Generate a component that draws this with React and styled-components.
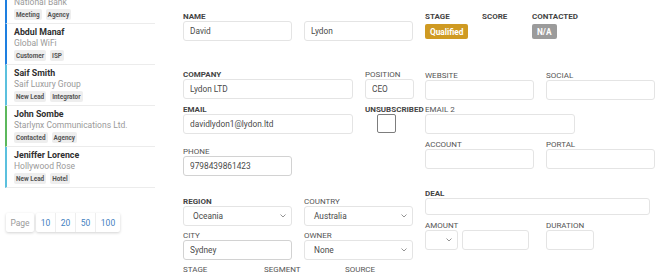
import React from 'react'
import styled, { createGlobalStyle } from 'styled-components'

const GlobalStyle = createGlobalStyle`
  html, body {
    margin: 0;
    padding: 0;
    overflow: hidden;
    background: #fff;
    font-family: Roboto, "Liberation Sans", Arial, sans-serif;
  }
`;

const leads = [
    { name: 'Mark Evans', company: 'National Bank', tags: ['Meeting', 'Agency'], color: '#1e7fe0' },
    { name: 'Abdul Manaf', company: 'Global WiFi', tags: ['Customer', 'ISP'], color: '#1e7fe0' },
    { name: 'Saif Smith', company: 'Saif Luxury Group', tags: ['New Lead', 'Integrator'], color: '#5bc0de' },
    { name: 'John Sombe', company: 'Starlynx Communications Ltd.', tags: ['Contacted', 'Agency'], color: '#5cb85c' },
    { name: 'Jeniffer Lorence', company: 'Hollywood Rose', tags: ['New Lead', 'Hotel'], color: '#5bc0de' },
];

function Chevron() {
    return (
        <svg width="6" height="4" viewBox="0 0 6 4">
            <polyline points="0.5,0.5 3,3 5.5,0.5" fill="none" stroke="#888" strokeWidth="0.9" />
        </svg>
    )
}

function Field({ label, bold, width, value, select, strong, height, empty, children }) {
    let control = children
    if (!children && !empty) {
        control = select
            ? <SelectBox $strong={strong}><span>{value}</span><Chevron /></SelectBox>
            : <Input $strong={strong} $height={height} defaultValue={value} readOnly />
    }
    return (
        <FieldBox $width={width}>
            <Label $bold={bold}>{label}</Label>
            {control}
        </FieldBox>
    )
}

function App() {
    return (
        <Page>
            <GlobalStyle />
            <Sidebar>
                <LeadList>
                    {leads.map((l) => (
                        <LeadItem key={l.name} $color={l.color}>
                            <LeadName>{l.name}</LeadName>
                            <LeadCompany>{l.company}</LeadCompany>
                            <Tags>
                                {l.tags.map((t) => <Tag key={t}>{t}</Tag>)}
                            </Tags>
                        </LeadItem>
                    ))}
                </LeadList>
                <Pager>
                    <PageLabel>Page</PageLabel>
                    <PageGroup>
                        <PageLink>10</PageLink>
                        <PageLink>20</PageLink>
                        <PageLink>50</PageLink>
                        <PageLink $wide>100</PageLink>
                    </PageGroup>
                </Pager>
            </Sidebar>

            <Form>
                <Column>
                    <Row>
                        <Field label="Name" bold width={109} value="David" />
                        <Field label="" width={109} value="Lydon" />
                    </Row>
                    <Row $mt={29}>
                        <Field label="Company" bold width={170} value="Lydon LTD" />
                        <Field label="Position" width={49} value="CEO" />
                    </Row>
                    <Row $mt={6}>
                        <Field label="Email" bold width={170} value="davidlydon1@lydon.ltd" />
                        <Field label="Unsubscribed" bold width={49}>
                            <Checkbox />
                        </Field>
                    </Row>
                    <Row $mt={13}>
                        <Field label="Phone" width={109} value="9798439861423" strong />
                    </Row>
                    <Row $mt={21}>
                        <Field label="Region" bold width={109} value="Oceania" select />
                        <Field label="Country" width={109} value="Australia" select />
                    </Row>
                    <Row $mt={5}>
                        <Field label="City" width={109} value="Sydney" strong />
                        <Field label="Owner" width={109} value="None" select />
                    </Row>
                    <Row $mt={5}>
                        <Field label="Stage" width={69} value="" select />
                        <Field label="Segment" width={69} value="" select />
                        <Field label="Source" width={69} value="" select />
                    </Row>
                </Column>

                <Column>
                    <Row>
                        <Field label="Stage" bold width={45}>
                            <Badge $bg="#cf9a22">Qualified</Badge>
                        </Field>
                        <Field label="Score" bold width={38} empty />
                        <Field label="Contacted" bold width={60}>
                            <Badge $bg="#9b9b9b">N/A</Badge>
                        </Field>
                    </Row>
                    <Row $mt={32}>
                        <Field label="Website" width={109} value="" />
                        <Field label="Social" width={109} value="" />
                    </Row>
                    <Row $mt={5}>
                        <Field label="Email 2" width={150} value="" />
                    </Row>
                    <Row $mt={6}>
                        <Field label="Account" width={109} value="" />
                        <Field label="Portal" width={109} value="" />
                    </Row>
                    <Row $mt={20}>
                        <Field label="Deal" bold width={225} value="" height={17} />
                    </Row>
                    <Row $mt={6}>
                        <Field label="Amount" width={109}>
                            <AmountGroup>
                                <SelectBox $w={33}><span></span><Chevron /></SelectBox>
                                <Input $w={67} defaultValue="" readOnly />
                            </AmountGroup>
                        </Field>
                        <Field label="Duration" width={48} value="" />
                    </Row>
                </Column>
            </Form>
        </Page>
    )
}

const Page = styled.div`
    display: flex;
    align-items: flex-start;
    width: 669px;
    height: 272px;
    overflow: hidden;
`;

const Sidebar = styled.div`
    width: 150px;
    padding-left: 5px;
    flex-shrink: 0;
`;

const LeadList = styled.div`
    margin-top: -17px;
`;

const LeadItem = styled.div`
    border-left: 2px solid ${p => p.$color};
    border-bottom: 1px solid #ececec;
    padding: 3px 0 3px 7px;
`;

const LeadName = styled.div`
    font-size: 8.8px;
    line-height: 11px;
    font-weight: 700;
    color: #2f2f2f;
    white-space: nowrap;
`;

const LeadCompany = styled.div`
    font-size: 8.5px;
    line-height: 11px;
    color: #9a9a9a;
    white-space: nowrap;
`;

const Tags = styled.div`
    display: flex;
    align-items: flex-start;
    gap: 4px;
    height: 11px;
    margin-top: 1px;
`;

const Tag = styled.span`
    display: block;
    font-size: 6.4px;
    line-height: 8px;
    font-weight: 700;
    color: #555;
    background: #eeeeee;
    border-radius: 2px;
    padding: 1.5px 2px;
`;

const Pager = styled.div`
    display: flex;
    gap: 2px;
    margin: 25px 0 0 1px;
`;

const PageLabel = styled.div`
    width: 28px;
    height: 19px;
    display: flex;
    align-items: center;
    justify-content: center;
    font-size: 8.5px;
    color: #9a9a9a;
    box-shadow: 0 1px 3px rgba(0, 0, 0, 0.18);
    border-radius: 2px;
`;

const PageGroup = styled.div`
    display: flex;
    box-shadow: 0 1px 3px rgba(0, 0, 0, 0.18);
    border-radius: 2px;
`;

const PageLink = styled.div`
    width: ${p => p.$wide ? '24px' : '19px'};
    height: 19px;
    display: flex;
    align-items: center;
    justify-content: center;
    font-size: 8.5px;
    color: #3f7fc1;
    border-left: 1px solid #eee;
    &:first-child { border-left: none; }
`;

const Form = styled.div`
    display: grid;
    grid-template-columns: 230px 230px;
    column-gap: 12px;
    padding: 12px 0 0 28px;
`;

const Column = styled.div`
    display: flex;
    flex-direction: column;
`;

const Row = styled.div`
    display: flex;
    gap: 12px;
    margin-top: ${p => p.$mt || 0}px;
`;

const FieldBox = styled.div`
    width: ${p => p.$width}px;
    flex-shrink: 0;
    display: flex;
    flex-direction: column;
`;

const Label = styled.div`
    font-size: 8px;
    line-height: 9px;
    height: 9px;
    text-transform: uppercase;
    font-weight: ${p => p.$bold ? 700 : 400};
    color: ${p => p.$bold ? '#444' : '#555'};
    white-space: nowrap;
`;

const Input = styled.input`
    box-sizing: border-box;
    width: ${p => p.$w ? `${p.$w}px` : '100%'};
    height: ${p => p.$height || 20}px;
    margin: 0;
    padding: 0 6px;
    border: 1px solid ${p => p.$strong ? '#d2d2d2' : '#e4e4e4'};
    border-radius: 3px;
    font-family: Roboto, "Liberation Sans", Arial, sans-serif;
    font-size: 8.3px;
    color: #4a4a4a;
    background: #fff;
    outline: none;
`;

const SelectBox = styled.div`
    box-sizing: border-box;
    width: ${p => p.$w ? `${p.$w}px` : '100%'};
    height: 20px;
    display: flex;
    align-items: center;
    justify-content: space-between;
    padding: 0 5px 0 9px;
    border: 1px solid #e4e4e4;
    border-radius: 3px;
    font-size: 8.3px;
    color: #4a4a4a;
`;

const AmountGroup = styled.div`
    display: flex;
    gap: 4px;
`;

const Checkbox = styled.span`
    display: block;
    width: 19px;
    height: 19px;
    box-sizing: border-box;
    margin: 0 0 0 12px;
    border: 1px solid #7d7d7d;
    border-radius: 2px;
    background: #fff;
`;

const Badge = styled.span`
    align-self: flex-start;
    margin-top: 3px;
    height: 15px;
    padding: 0 5px;
    display: flex;
    align-items: center;
    border-radius: 2px;
    background: ${p => p.$bg};
    color: #fff;
    font-size: 8.3px;
    font-weight: 700;
    white-space: nowrap;
`;

export default App;
